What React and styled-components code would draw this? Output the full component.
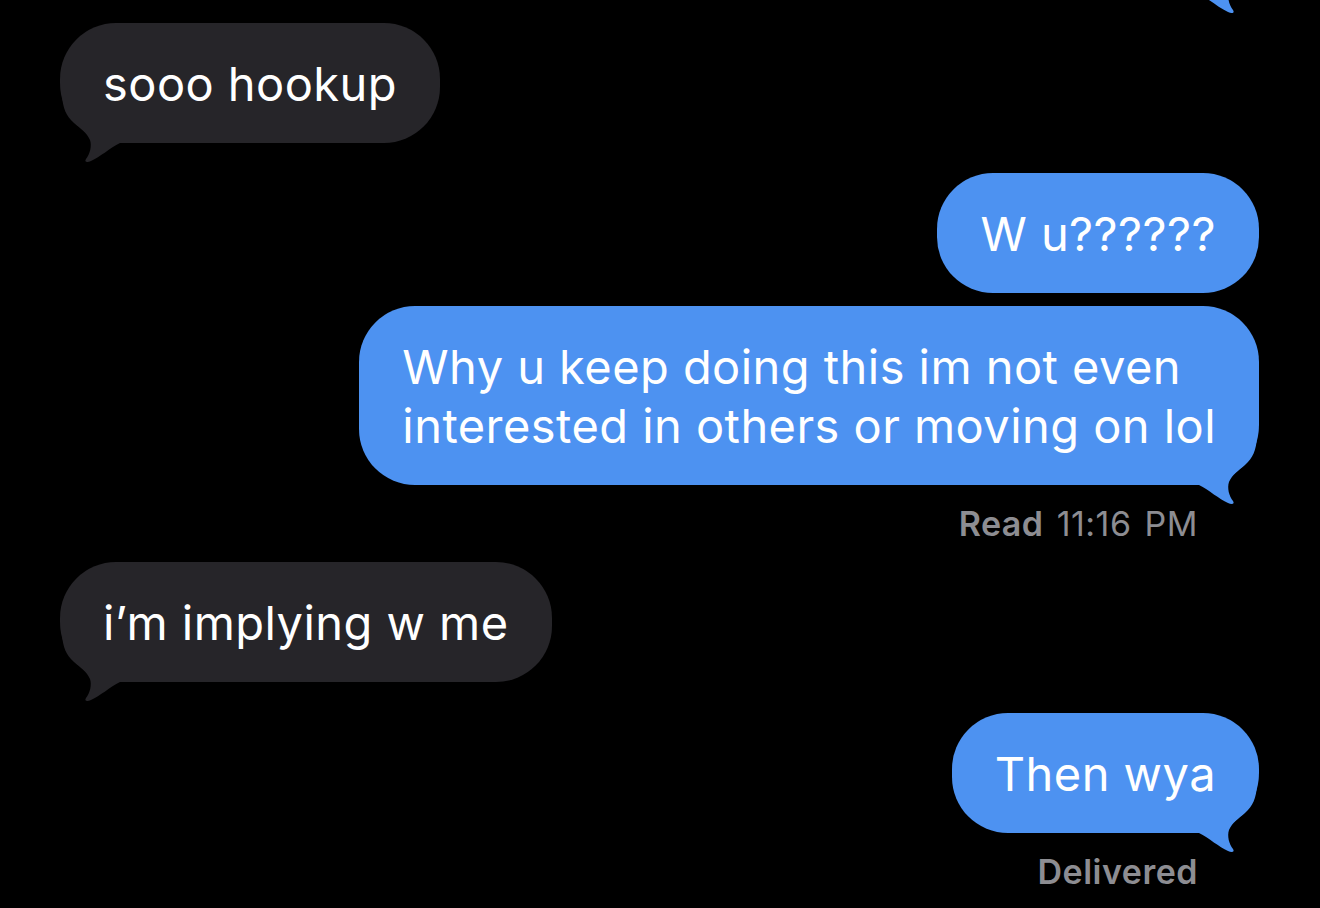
import styled, { createGlobalStyle } from "styled-components";

const GlobalStyle = createGlobalStyle`
  html, body {
    margin: 0;
    padding: 0;
    background: #000000;
    height: 908px;
    overflow: hidden;
  }
  body {
    font-family: Inter, "Noto Sans", "Liberation Sans", sans-serif;
    -webkit-font-smoothing: antialiased;
  }
`;

const Thread = styled.div`
  display: flex;
  flex-direction: column;
  padding: 0 61px 0 60px;
  margin-top: -126px;
`;

const Row = styled.div`
  display: flex;
  justify-content: ${(props) => (props.me ? "flex-end" : "flex-start")};
  margin-top: ${(props) => props.gap || 0}px;
`;

const Bubble = styled.div`
  position: relative;
  box-sizing: border-box;
  min-height: 120px;
  max-width: 920px;
  padding: 31px 43px 30px 43px;
  border-radius: 56px;
  ${(props) =>
    props.tail &&
    (props.me
      ? "border-bottom-right-radius: 60px;"
      : "border-bottom-left-radius: 60px;")}
  background: ${(props) => (props.me ? "#4d92f1" : "#262529")};
  color: #ffffff;
  font-size: 47px;
  line-height: 59px;
  letter-spacing: 0.45px;
  white-space: nowrap;
`;

const Text = styled.span`
  position: relative;
  z-index: 1;
`;

const Tail = styled.svg`
  position: absolute;
  bottom: -21px;
  width: 64px;
  height: 68px;
  ${(props) =>
    props.me ? "right: 0;" : "left: 0; transform: scaleX(-1);"}
  path {
    fill: ${(props) => (props.me ? "#4d92f1" : "#262529")};
  }
`;

const Status = styled.div`
  align-self: flex-end;
  margin: 19px 61px 0 0;
  font-size: 34px;
  line-height: 40px;
  letter-spacing: 0.5px;
  word-spacing: 3px;
  color: #8d8d92;

  b {
    font-weight: 600;
  }
`;

function Message({ me, gap, tail = true, children }) {
  return (
    <Row me={me} gap={gap}>
      <Bubble me={me} tail={tail}>
        <Text>{children}</Text>
        {tail && (
          <Tail me={me} viewBox="0 0 64 68">
            <path d="M0 0 L62 0 C61 12 58 20 50 27 C44 32 37 37 34 44 C32 50 34 58 38 63 C40 66 37 67 33 65 C24 61 14 52 4 47 L0 47 Z" />
          </Tail>
        )}
      </Bubble>
    </Row>
  );
}

export default function App() {
  return (
    <>
      <GlobalStyle />
      <Thread>
        <Message me>&nbsp;</Message>
        <Message gap={29}>sooo hookup</Message>
        <Message me gap={30} tail={false}>
          W u??????
        </Message>
        <Message me gap={13}>
          Why u keep doing this im not even
          <br />
          interested in others or moving on lol
        </Message>
        <Status>
          <b>Read</b> 11:16 PM
        </Status>
        <Message gap={18}>i’m implying w me</Message>
        <Message me gap={31}>Then wya</Message>
        <Status>
          <b>Delivered</b>
        </Status>
      </Thread>
    </>
  );
}
